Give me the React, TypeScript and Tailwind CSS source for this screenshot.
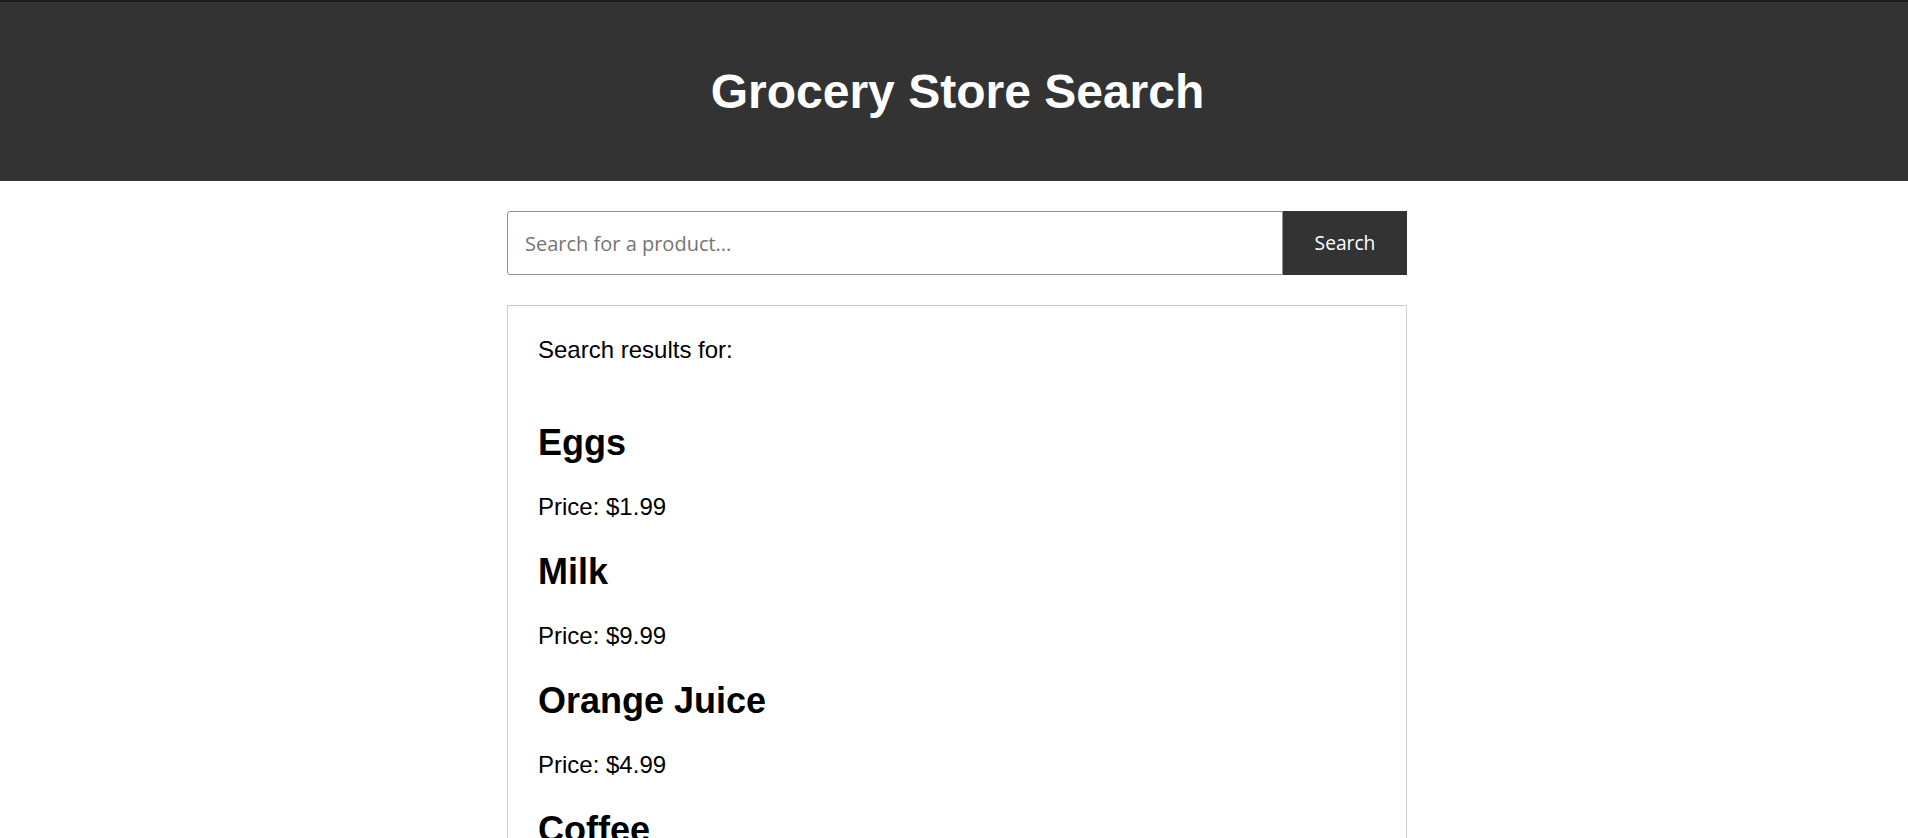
import * as React from "react"

const products = [
    { name: "Eggs", price: "$1.99" },
    { name: "Milk", price: "$9.99" },
    { name: "Orange Juice", price: "$4.99" },
    { name: "Coffee", price: "$7.99" },
    { name: "Bread", price: "$2.49" },
]

function SearchBar() {
    const [query, setQuery] = React.useState("")

    return (
        <div className="flex h-[64px] w-full">
            <input
                type="text"
                value={query}
                onChange={(e) => setQuery(e.target.value)}
                placeholder="Search for a product..."
                className="h-full flex-1 rounded-l-[3px] border border-[#8f8f9d] bg-white px-[17px] font-['Open_Sans',sans-serif] text-[20px] text-black outline-none placeholder:text-[#757575]"
            />
            <button
                type="button"
                className="h-full w-[124px] bg-[#333333] font-['Open_Sans',sans-serif] text-[19.2px] text-white"
            >
                Search
            </button>
        </div>
    )
}

export default function App() {
    return (
        <div className="min-h-screen bg-white font-['Liberation_Sans',Arial,sans-serif] text-black">
            <header className="flex h-[181px] items-center justify-center border-t-2 border-[#1d1c22] bg-[#333333] pl-[7px] pb-[1px]">
                <h1 className="text-[48px] font-bold leading-[55px] text-white">
                    Grocery Store Search
                </h1>
            </header>

            <div className="flex justify-center pl-[6px]">
                <main className="w-[900px]">
                    <div className="mt-[30px]">
                        <SearchBar />
                    </div>

                    <section className="mt-[30px] border border-[#cccccc] p-[30px]">
                        <p className="text-[24px] leading-[28px]">Search results for:</p>

                        <div className="mt-[58px]">
                            {products.map((p) => (
                                <div key={p.name}>
                                    <h2 className="mb-[30px] text-[36px] font-bold leading-[41px]">
                                        {p.name}
                                    </h2>
                                    <p className="mb-[30px] text-[24px] leading-[28px]">
                                        Price: {p.price}
                                    </p>
                                </div>
                            ))}
                        </div>
                    </section>
                </main>
            </div>
        </div>
    )
}
